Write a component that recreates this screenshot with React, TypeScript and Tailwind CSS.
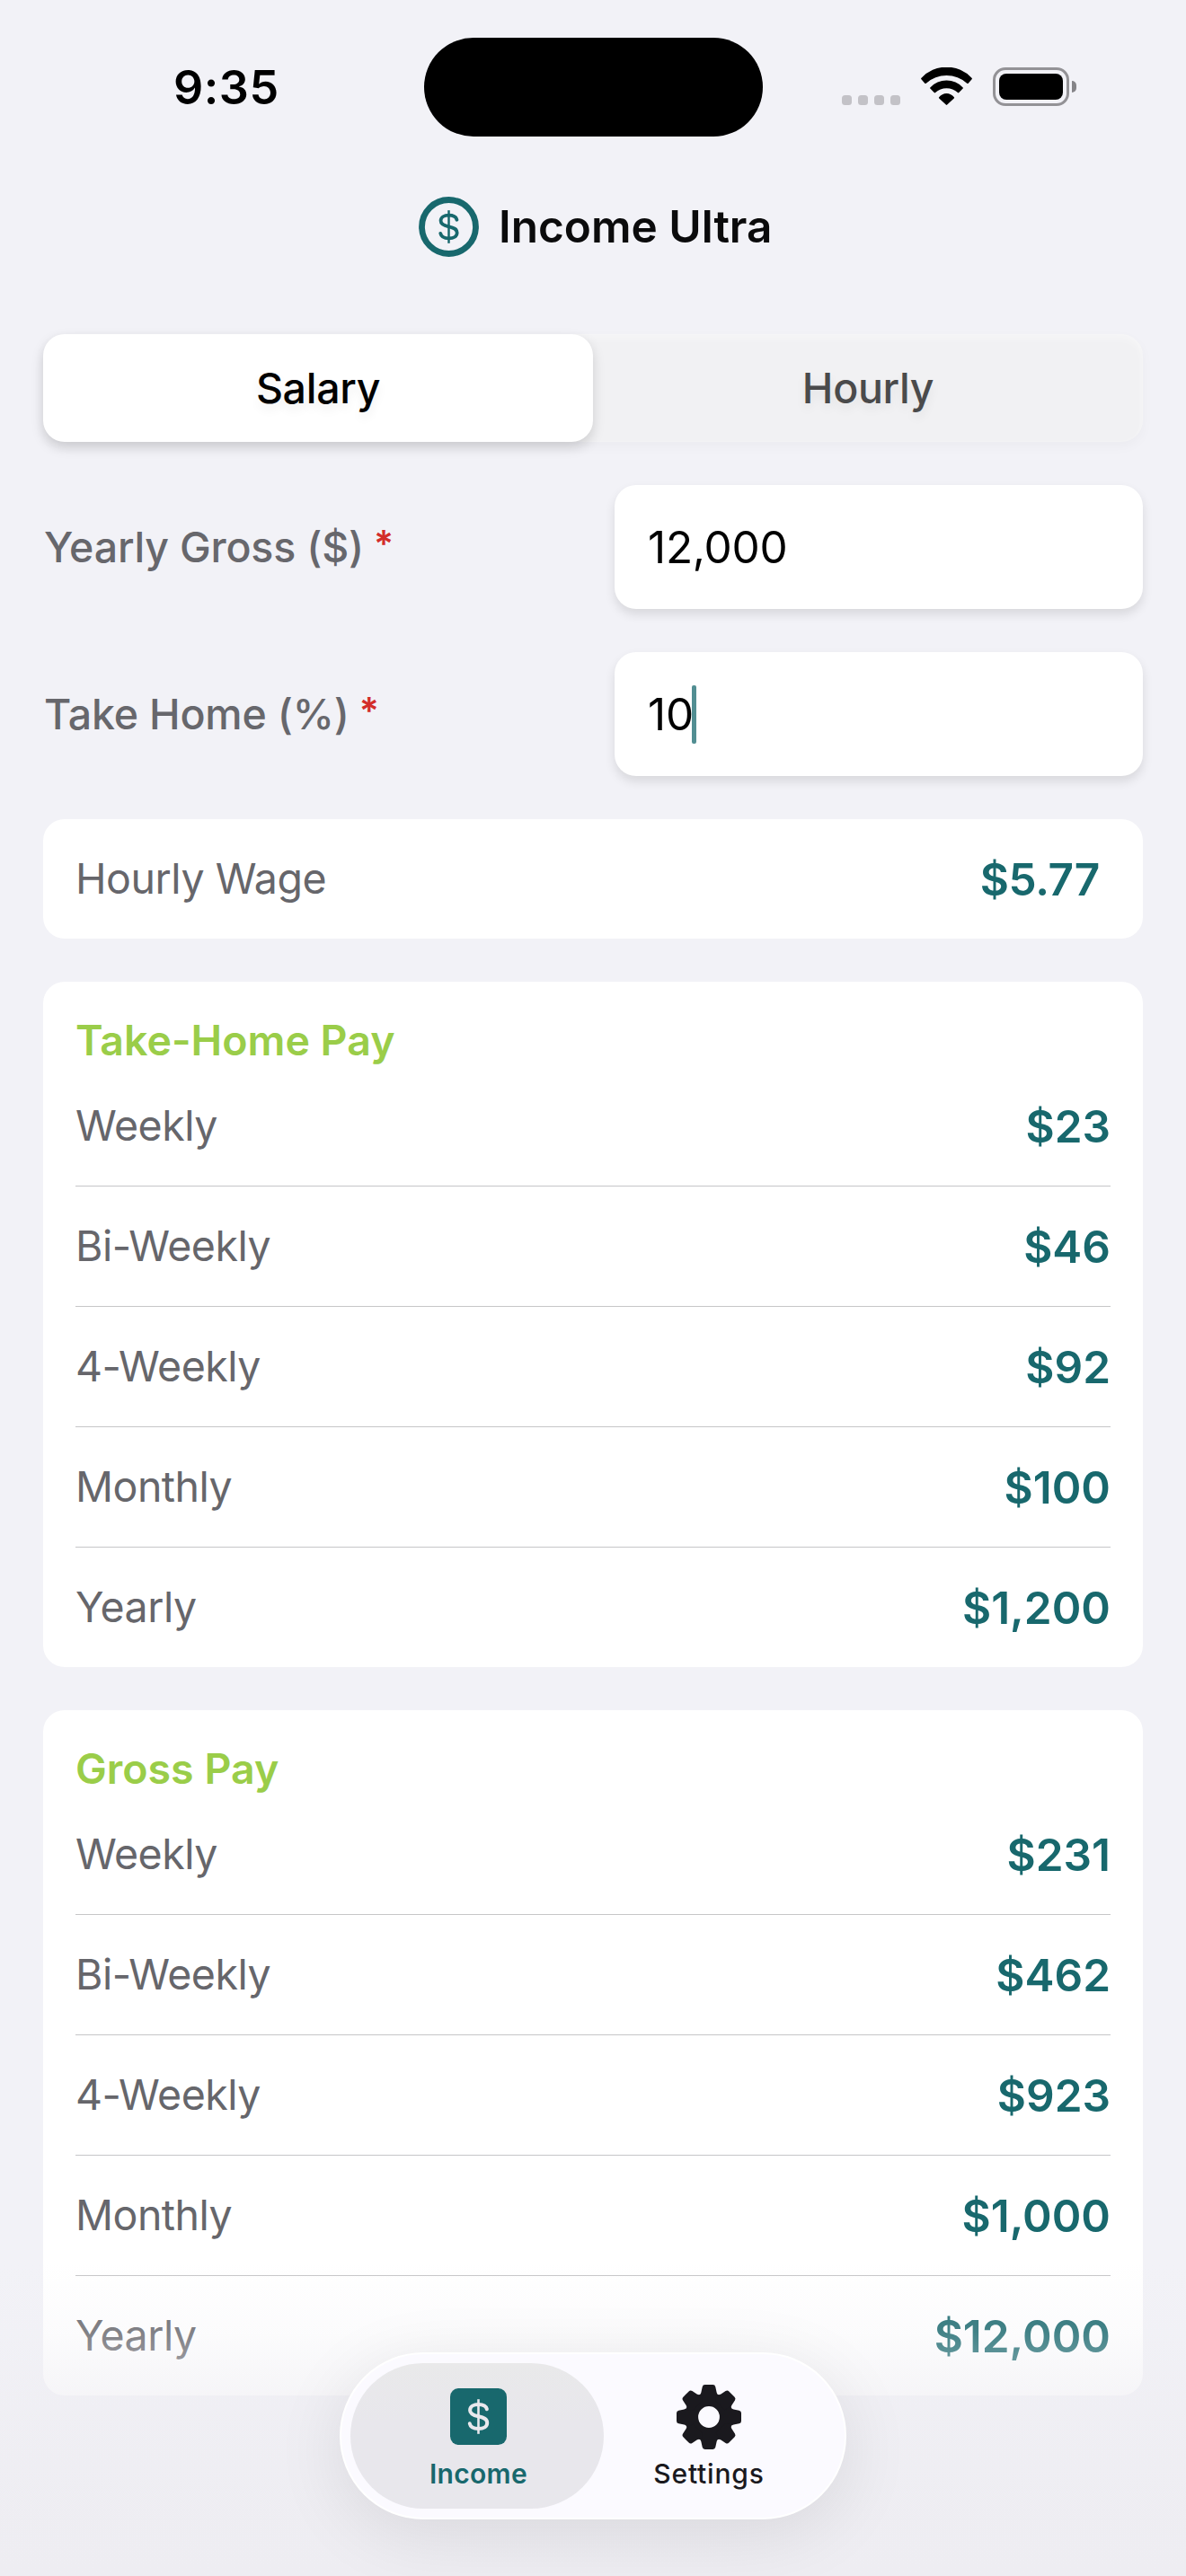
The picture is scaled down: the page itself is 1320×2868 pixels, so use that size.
const takeHome = [
  ["Weekly", "$23"],
  ["Bi-Weekly", "$46"],
  ["4-Weekly", "$92"],
  ["Monthly", "$100"],
  ["Yearly", "$1,200"],
];

const gross = [
  ["Weekly", "$231"],
  ["Bi-Weekly", "$462"],
  ["4-Weekly", "$923"],
  ["Monthly", "$1,000"],
  ["Yearly", "$12,000"],
];

const teeth = [0, 45, 90, 135, 180, 225, 270, 315];

function DollarStroke() {
  return (
    <g fill="none" stroke="currentColor">
      <path
        d="M9.4 -8.2C8.6 -11.6 5 -13.5 0 -13.5C-5.4 -13.5 -9.4 -11 -9.4 -7.1C-9.4 -3.2 -6 -1.5 0 -0.2C6 1.1 9.7 2.6 9.7 7C9.7 11 5.8 13.5 0 13.5C-5.6 13.5 -9 11.2 -9.7 7.8"
        strokeWidth="4"
        strokeLinecap="round"
      />
      <path d="M0 -19.3V19.3" strokeWidth="2.6" />
    </g>
  );
}

function CoinIcon() {
  return (
    <svg className="size-[67px] text-[#18686d]" viewBox="-33.5 -33.5 67 67">
      <circle r="30" fill="none" stroke="currentColor" strokeWidth="6.8" />
      <g transform="scale(0.95)">
        <DollarStroke />
      </g>
    </svg>
  );
}

function IncomeIcon() {
  return (
    <svg className="size-[63px]" viewBox="-31.5 -31.5 63 63">
      <rect x="-31.5" y="-31.5" width="63" height="63" rx="9.5" fill="#18686d" />
      <g className="text-[#e9e8ed]">
        <DollarStroke />
      </g>
    </svg>
  );
}

function GearIcon() {
  return (
    <svg className="size-[72px]" viewBox="-36 -36 72 72" fill="#1a191e">
      <circle r="19.2" fill="none" stroke="#1a191e" strokeWidth="14.6" />
      {teeth.map((angle) => (
        <path
          key={angle}
          transform={`rotate(${angle})`}
          d="M-12 -23.8C-10 -24.6 -9 -25.6 -8.6 -27.5L-7.3 -33.6Q-6.8 -36 -4.4 -36H4.4Q6.8 -36 7.3 -33.6L8.6 -27.5C9 -25.6 10 -24.6 12 -23.8L8 -18H-8Z"
        />
      ))}
    </svg>
  );
}

function StatusBar() {
  return (
    <div className="flex h-[196px] pl-[192px]">
      <div className="flex w-[280px] items-center pl-px text-[52px] font-semibold tracking-[0.5px] text-black">9:35</div>
      <div className="mt-[42px] h-[110px] w-[377px] rounded-[55px] bg-black" />
      <div className="mt-[75px] ml-[88px] flex h-[43px]">
        <div className="mt-[31px] flex gap-[7px]">
          <span className="size-[11px] rounded-[3.5px] bg-[#c3c2c7]" />
          <span className="size-[11px] rounded-[3.5px] bg-[#c3c2c7]" />
          <span className="size-[11px] rounded-[3.5px] bg-[#c3c2c7]" />
          <span className="size-[11px] rounded-[3.5px] bg-[#c3c2c7]" />
        </div>
        <svg className="ml-[23px] h-[42px] w-[57px]" viewBox="0 0 57 42">
          <path d="M0.3 12A38.3 38.3 0 0 1 56.7 12Q57.2 12.7 56.6 13.3L52.7 17.7Q52 18.4 51.2 17.7A34.3 34.3 0 0 0 5.8 17.7Q5 18.4 4.3 17.7L0.4 13.3Q-0.2 12.7 0.3 12Z" />
          <path d="M10.3 22.4A24.8 24.8 0 0 1 46.7 22.4Q47.3 23 46.7 23.6L42.3 28.1Q41.6 28.8 40.9 28.1A18.1 18.1 0 0 0 16.1 28.1Q15.4 28.8 14.7 28.1L10.3 23.6Q9.7 23 10.3 22.4Z" />
          <path d="M20.1 33.2A10.6 10.6 0 0 1 36.9 33.2Q37.4 33.9 36.8 34.5L29.2 41.6Q28.5 42.3 27.8 41.6L20.2 34.5Q19.6 33.9 20.1 33.2Z" />
        </svg>
        <div className="ml-[23px] h-[43px] w-[85px] rounded-[14px] border-[3px] border-[#939296] p-1">
          <div className="h-[29px] w-[71px] rounded-[8px] bg-black" />
        </div>
        <div className="mt-[15px] ml-[3px] h-[13px] w-[5px] rounded-r-[5px] bg-[#858488]" />
      </div>
    </div>
  );
}

function Field({ label, value, focused }: { label: string; value: string; focused?: boolean }) {
  return (
    <div className="flex h-[138px] items-center justify-between">
      <div className="flex items-center gap-[11px] pt-px pl-px text-[46.5px] font-medium tracking-[-0.2px] text-[#67676c]">
        <span>{label}</span>
        <span className="pb-[8px] text-[41px] font-semibold text-[#d32d2a]">*</span>
      </div>
      <div className="flex h-[138px] w-[588px] items-center rounded-[24px] bg-white pt-px pl-[37px] text-[49.5px] tracking-[-0.25px] text-black shadow-[0_6px_12px_rgba(0,0,0,0.11)]">
        {value}
        {focused && <span className="-ml-[2px] h-[65px] w-[5.5px] rounded-[2px] bg-[#18686d]/75" />}
      </div>
    </div>
  );
}

function PayCard({ title, rows }: { title: string; rows: string[][] }) {
  return (
    <section className="rounded-[24px] bg-white px-9 pt-9">
      <h2 className="h-[58px] text-[46.5px] leading-[58px] font-semibold text-[#9acd49]">{title}</h2>
      <div className="divide-y divide-[#c6c6c8]">
        {rows.map(([label, value]) => (
          <div key={label} className="flex h-[134px] items-center justify-between pt-px last:h-[133px]">
            <span className="text-[46.5px] tracking-[-0.5px] text-[#66666b]">{label}</span>
            <span className="text-[49.5px] font-semibold text-[#18686d]">{value}</span>
          </div>
        ))}
      </div>
    </section>
  );
}

export default function App() {
  return (
    <div className="relative h-[2868px] w-[1320px] overflow-hidden bg-[#f2f2f7] font-[Inter,sans-serif]">
      <StatusBar />
      <header className="flex h-[113px] items-center gap-[22px] pl-[466px]">
        <CoinIcon />
        <h1 className="text-[49.5px] font-semibold text-[#0b0b0c]">Income Ultra</h1>
      </header>

      <main className="mt-[63px] flex flex-col gap-12 px-12">
        <div className="flex h-[120px] rounded-[24px] bg-[#f1f1f3] text-[46.5px] font-medium tracking-[-0.3px] shadow-[0_5px_14px_rgba(0,0,0,0.03),inset_0_5px_10px_rgba(255,255,255,0.35),inset_-2px_0_5px_rgba(255,255,255,0.2)]">
          <div className="flex w-[612px] items-center justify-center rounded-[24px] bg-white pt-px text-black shadow-[0_6px_14px_rgba(0,0,0,0.15)] [text-shadow:0_6px_12px_rgba(0,0,0,0.07)]">
            Salary
          </div>
          <div className="flex flex-1 items-center justify-center pt-px text-[#4a4a4b] [text-shadow:0_6px_12px_rgba(0,0,0,0.07)]">
            Hourly
          </div>
        </div>

        <Field label="Yearly Gross ($)" value="12,000" />
        <Field label="Take Home (%)" value="10" focused />

        <div className="flex h-[133px] items-center justify-between rounded-[24px] bg-white pt-px pr-12 pl-9">
          <span className="text-[46.5px] tracking-[-0.45px] text-[#66666b]">Hourly Wage</span>
          <span className="text-[49.5px] font-semibold tracking-[-0.3px] text-[#18686d]">$5.77</span>
        </div>

        <PayCard title="Take-Home Pay" rows={takeHome} />
        <PayCard title="Gross Pay" rows={gross} />
      </main>

      <div className="absolute inset-x-0 bottom-0 h-[348px] bg-[linear-gradient(to_bottom,rgba(238,237,242,0)_0%,rgba(238,237,242,0.2)_22%,rgba(238,237,242,0.55)_42%,rgba(238,237,242,0.9)_75%,rgba(238,237,242,1)_100%)]" />

      <nav className="absolute top-[2619px] left-[378px] flex h-[186px] w-[564px] rounded-[93px] border-2 border-white bg-[#fbfaff] p-[10px] shadow-[0_16px_80px_rgba(0,0,0,0.09)]">
        <div className="flex h-[162px] w-[282px] shrink-0 flex-col items-center rounded-[81px] bg-[linear-gradient(to_bottom,#e9e9ea,#e8e7ec_40%)] pt-[28px] pl-[3px] text-[#18686d]">
          <IncomeIcon />
          <span className="mt-[14px] text-[30px] leading-9 font-semibold tracking-[0.3px]">Income</span>
        </div>
        <div className="-ml-6 flex h-[162px] w-[282px] shrink-0 flex-col items-center pt-6 text-[#1a191e]">
          <GearIcon />
          <span className="mt-[9px] text-[30px] leading-9 font-medium tracking-[0.8px]">Settings</span>
        </div>
      </nav>
    </div>
  );
}
